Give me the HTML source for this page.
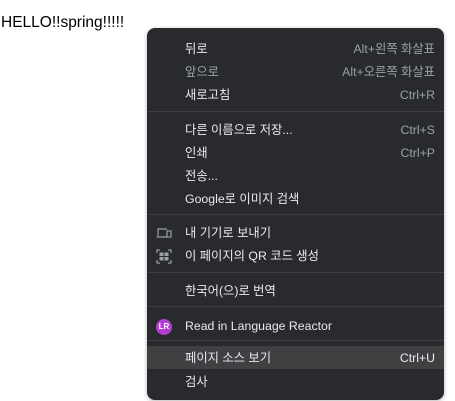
<!DOCTYPE html>
<html><head><meta charset="utf-8"><style>
body{margin:0;width:455px;height:401px;background:#fff;position:relative;overflow:hidden;font-family:"Liberation Sans","Noto Sans CJK KR",sans-serif}
.t{position:absolute;left:1px;top:14px;font-size:15.5px;color:#000}
.m{position:absolute;left:147px;top:28px;width:297px;height:372px;background:#292a2d;border-radius:8px;box-shadow:0 1px 4px rgba(0,0,0,.3)}
.i{position:absolute;left:0;width:297px;height:23px;font-size:12.3px;color:#e8eaed;line-height:25px}
.i span.l{position:absolute;left:38px}
.i span.r{position:absolute;right:9px;color:#9aa0a6}
.d{color:#9aa0a6}
.s{position:absolute;left:0;width:297px;height:1px;background:#3c3d40}
.h{background:#3f4042}
</style></head><body>
<div class="t">HELLO!!spring!!!!!</div>
<div class="m">
<div class="i" style="top:9px"><span class="l">뒤로</span><span class="r">Alt+왼쪽 화살표</span></div>
<div class="i" style="top:32px"><span class="l d">앞으로</span><span class="r">Alt+오른쪽 화살표</span></div>
<div class="i" style="top:55px"><span class="l">새로고침</span><span class="r">Ctrl+R</span></div>
<div class="s" style="top:83px"></div>
<div class="i" style="top:90px"><span class="l">다른 이름으로 저장...</span><span class="r">Ctrl+S</span></div>
<div class="i" style="top:113px"><span class="l">인쇄</span><span class="r">Ctrl+P</span></div>
<div class="i" style="top:136px"><span class="l">전송...</span></div>
<div class="i" style="top:159px"><span class="l">Google로 이미지 검색</span></div>
<div class="s" style="top:186px"></div>
<div class="i" style="top:193px"><svg style="position:absolute;left:9px;top:6px" width="16" height="12" viewBox="0 0 16 12" fill="none" stroke="#9aa0a6" stroke-width="1.2"><path d="M2 9V2h9M0.5 10h10"/><rect x="11" y="4" width="4" height="6"/></svg><span class="l">내 기기로 보내기</span></div>
<div class="i" style="top:216px"><svg style="position:absolute;left:9px;top:5px" width="16" height="15" viewBox="0 0 16 15" fill="#9aa0a6"><path d="M1 4V1h3M12 1h3v3M15 11v3h-3M4 14H1v-3" fill="none" stroke="#9aa0a6" stroke-width="1.2"/><rect x="3.5" y="3.5" width="4" height="3.5"/><rect x="8.5" y="3.5" width="4" height="3.5"/><rect x="3.5" y="8" width="4" height="3.5"/><rect x="8.5" y="8" width="4" height="3.5"/></svg><span class="l">이 페이지의 QR 코드 생성</span></div>
<div class="s" style="top:244px"></div>
<div class="i" style="top:251px"><span class="l">한국어(으)로 번역</span></div>
<div class="s" style="top:278px"></div>
<div class="i" style="top:286px"><div style="position:absolute;left:9px;top:5px;width:16px;height:16px;border-radius:50%;background:#b23fd3;color:#fff;font-size:8px;line-height:16px;text-align:center;font-weight:bold">LR</div><span class="l">Read in Language Reactor</span></div>
<div class="s" style="top:312px"></div>
<div class="i h" style="top:318px"><span class="l">페이지 소스 보기</span><span class="r" style="color:#e8eaed">Ctrl+U</span></div>
<div class="i" style="top:342px"><span class="l">검사</span></div>
</div>
</body></html>
